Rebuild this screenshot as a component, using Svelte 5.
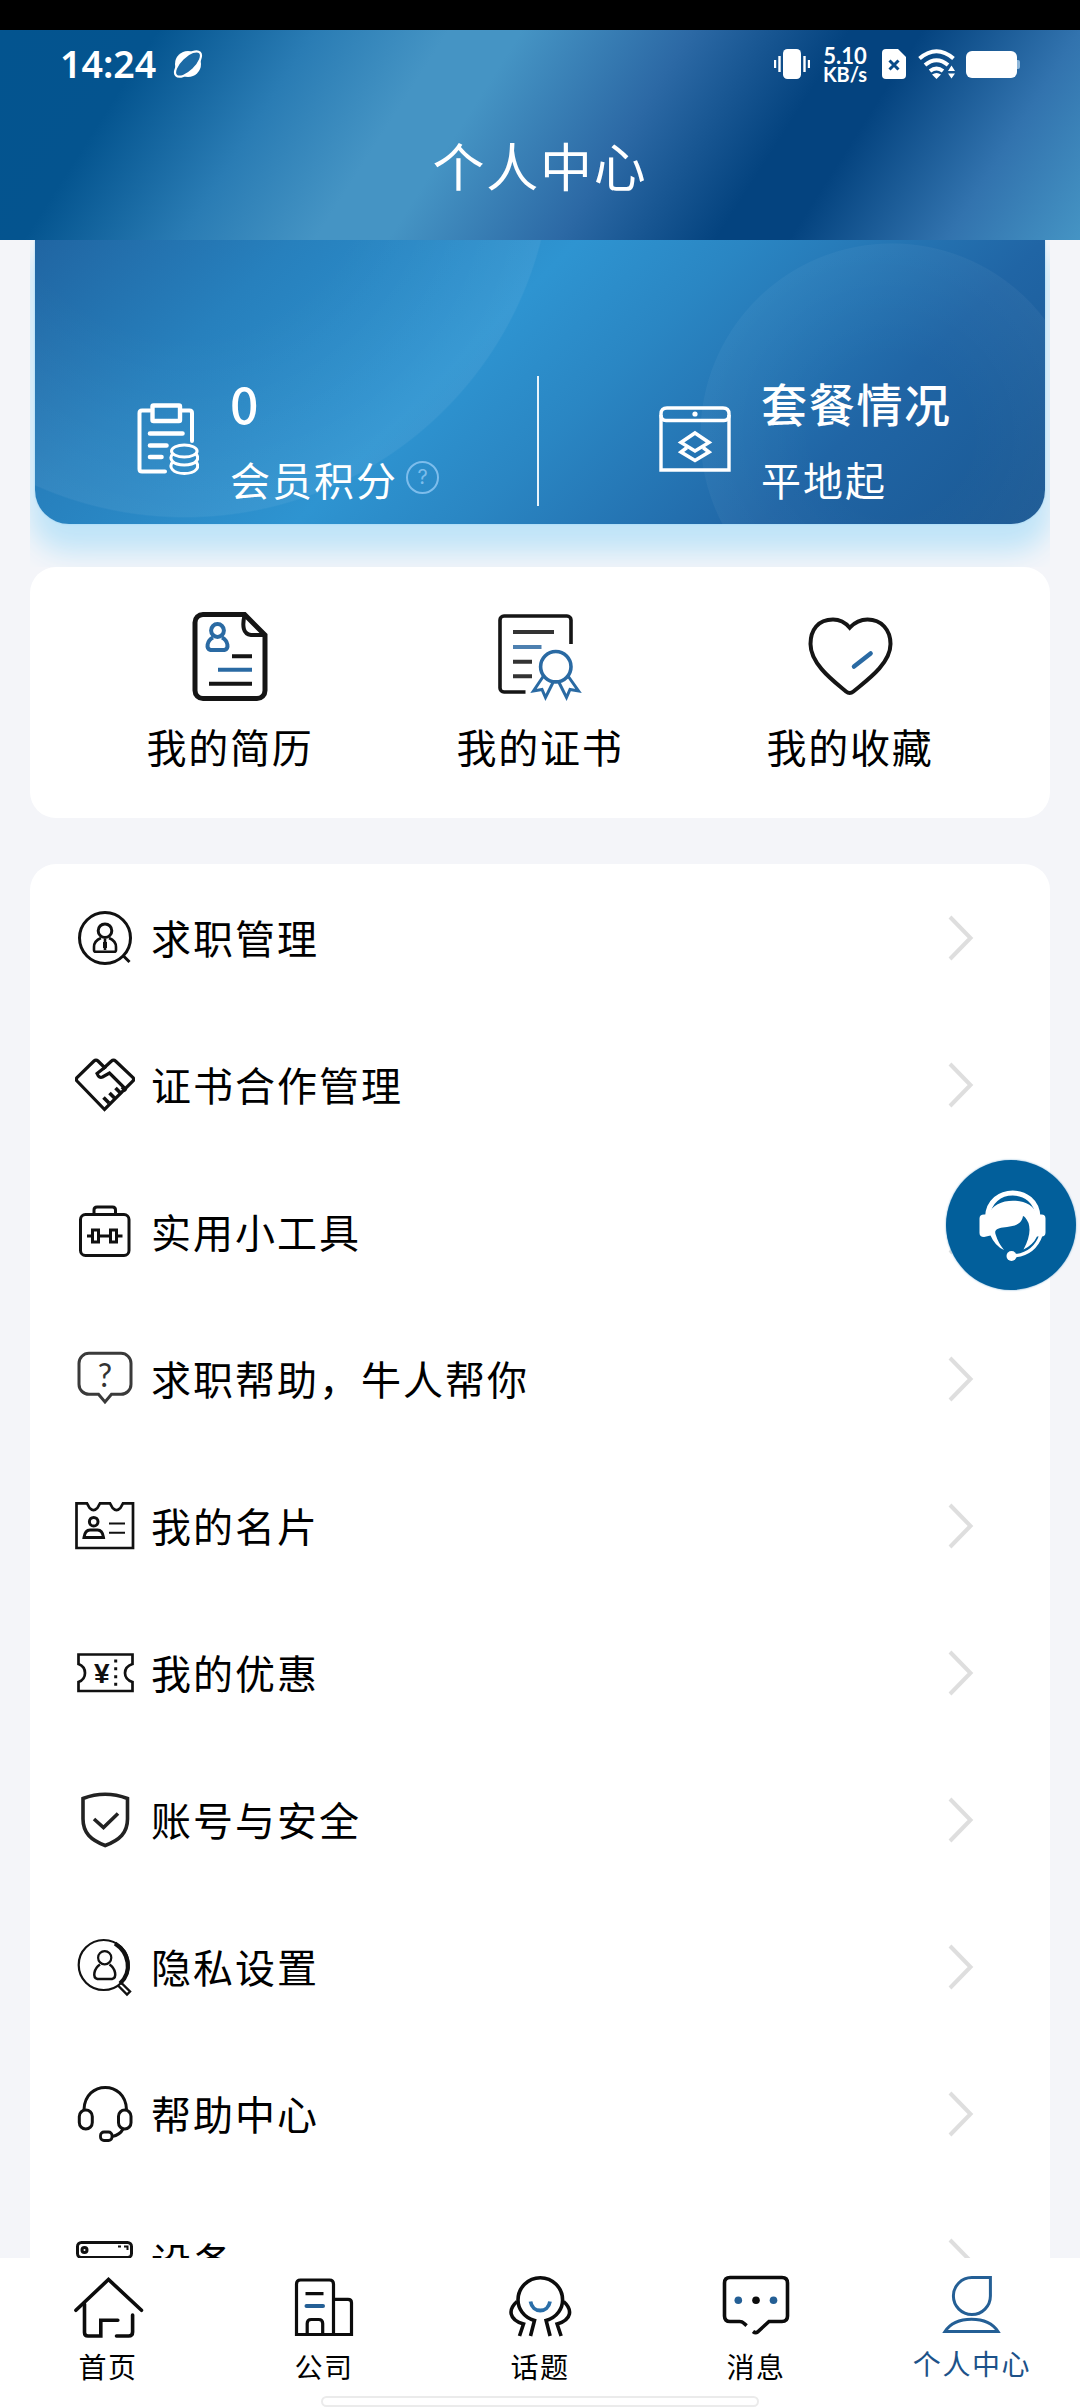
<script>
  const shortcuts = [
    { icon: 'resume', label: '我的简历' },
    { icon: 'certificate', label: '我的证书' },
    { icon: 'favorite', label: '我的收藏' }
  ];

  const menu = [
    { icon: 'job', label: '求职管理' },
    { icon: 'handshake', label: '证书合作管理' },
    { icon: 'tools', label: '实用小工具' },
    { icon: 'question', label: '求职帮助，牛人帮你' },
    { icon: 'card', label: '我的名片' },
    { icon: 'coupon', label: '我的优惠' },
    { icon: 'shield', label: '账号与安全' },
    { icon: 'privacy', label: '隐私设置' },
    { icon: 'headset', label: '帮助中心' },
    { icon: 'device', label: '设备' }
  ];

  const tabs = [
    { icon: 'home', label: '首页' },
    { icon: 'company', label: '公司' },
    { icon: 'topic', label: '话题' },
    { icon: 'message', label: '消息' },
    { icon: 'me', label: '个人中心' }
  ];

  let activeTab = $state('me');
</script>

{#snippet shortcutIcon(name)}
  <svg class="shortcut-icon" viewBox="0 0 96 96" fill="none" stroke="#151515" stroke-width="4">
    {#if name === 'resume'}
      <path d="M62.6 5.500H21a8 8 0 0 0-8 8v68a8 8 0 0 0 8 8h54a8 8 0 0 0 8-8V26z" stroke-width="5"></path>
      <path d="M62.6 6C60 17 61 25 69 26h14" stroke-width="4"></path>
      <g stroke="#2a6aa3" stroke-width="4">
        <circle cx="35.5" cy="21.5" r="6.4"></circle>
        <path d="M31 28.500c-6 3-7.500 11.500-2.500 12.500h14c5-1 3.500-9.500-2.500-12.500"></path>
      </g>
      <path d="M50 47.300h20M27 74.700h43"></path>
      <path d="M36 60.700h34" stroke="#2a6aa3"></path>
    {:else if name === 'certificate'}
      <path d="M79 35V11a4 4 0 0 0-4-4H12a4 4 0 0 0-4 4v68a4 4 0 0 0 4 4h21.500" stroke-width="3.600"></path>
      <path d="M21 23h41M21 52.700h19M21 67.300h19" stroke="#333"></path>
      <path d="M21 38h28.500" stroke="#4d80b0"></path>
      <g stroke="#2a6aa3" stroke-width="3.600">
        <circle cx="63.800" cy="57.700" r="15.200"></circle>
        <path d="M51.500 67l-10 15 8.500-1.500 3.500 8 8-16M76 67l10.500 15-8.500-1.500-3.500 8-8-16" stroke-width="3"></path>
      </g>
    {:else if name === 'favorite'}
      <path d="M47.700 18.700C42 12 36 10.500 31 10.500 16 10.500 8.500 21 8.500 35c0 20 23 37 35.500 47.500q3.700 3 7.400 0C64 72 88.500 55 88.500 35c0-14-9-24.500-23-24.500-6 0-12 2-17.800 8.200z"></path>
      <path d="M68.600 44.500L52 57.500" stroke="#2a6aa3" stroke-width="4.500" stroke-linecap="round"></path>
    {/if}
  </svg>
{/snippet}

{#snippet menuIcon(name)}
  <svg class="menu-icon" viewBox="0 0 60 60" fill="none" stroke="#111" stroke-width="3">
    {#if name === 'job'}
      <circle cx="30" cy="29" r="25.500"></circle>
      <path d="M48.500 47l6 6"></path>
      <circle cx="30" cy="21.700" r="6.800"></circle>
      <path d="M26 29c-5 2-7 4.500-7 9v3q0 1.800 1.800 1.800h18.400q1.800 0 1.800-1.800v-3c0-4.500-2-7-7-9M30 30v11" stroke-width="2.600"></path>
      <path d="M30 33v6" stroke-width="4"></path>
    {:else if name === 'handshake'}
      <path d="M29.500 53.500L2 25q-1.500-1.700 0-3.400L19 5q2-2 4 0l6.500 6.500L36.500 5q2-2 4 0L58 21.600q1.500 1.700 0 3.400z" stroke-width="3.200"></path>
      <path d="M31 10.500l-9 7q2 5 5.500 3.500l7-4 16.500 16.500" stroke-width="3.200"></path>
      <path d="M28.500 41.500l5.500 5.500M34.500 37l5.500 5.500M40.500 32l6 6M47 31l4 4" stroke-width="3.600"></path>
    {:else if name === 'tools'}
      <rect x="5.500" y="11.500" width="48.500" height="41" rx="5"></rect>
      <path d="M19 11.500V7q0-3 3-3h15.500q3 0 3 3v4.500"></path>
      <path d="M12 33h5.500M24 33h11.500M41.500 33H47.500"></path>
      <path d="M17.500 27h6v12h-6zM35.500 27h6v12h-6z" stroke-width="3"></path>
    {:else if name === 'question'}
      <path d="M14 3.300h32a10 10 0 0 1 10 10v21a10 10 0 0 1-10 10H36.500L30 52l-6.500-7.700H14a10 10 0 0 1-10-10v-21a10 10 0 0 1 10-10z" stroke="#3a3a3a"></path>
      <text class="glyph thin" x="30" y="37" text-anchor="middle">?</text>
    {:else if name === 'card'}
      <path d="M1.500 6.300h10.500l2.500 4.500q4 4.500 8 0l2.500-4.500h10l2.500 4.500q4 4.500 8 0l2.500-4.500H58v44.700H1.500z" stroke-width="2.700"></path>
      <circle cx="18.700" cy="24.700" r="4.300"></circle>
      <path d="M9 40.500q1-7.500 6-7.500h7.500q5 0 6 7.500z"></path>
      <path d="M34 26.500h16M34 35.800h16" stroke-width="2"></path>
    {:else if name === 'coupon'}
      <path d="M3.500 10.500h54V20q-7.500 2.500-7.500 9t7.500 9v9h-54v-9q6.500-2.500 6.500-9t-6.500-9z" stroke-width="2.700"></path>
      <text class="glyph" x="26.700" y="38.500" text-anchor="middle">¥</text>
      <path d="M40.700 15.500v3M40.700 23.200v3M40.700 31.200v3M40.700 38.800v3" stroke-width="3"></path>
    {:else if name === 'shield'}
      <path d="M8 7.500Q30-1 52.500 7.500V28c0 14-8 21-22.300 26.500C16 49 8 42 8 28z" stroke="#222" stroke-width="3.600"></path>
      <path d="M19 28l9.500 8.500L43 22.500" stroke="#222" stroke-width="3.600"></path>
    {:else if name === 'privacy'}
      <circle cx="28.700" cy="27" r="25" stroke-width="2.200"></circle>
      <path d="M40 5.500c14 9 18 28 5 40" stroke-width="4.200"></path>
      <circle cx="29.700" cy="19.700" r="6.600" stroke-width="2.200"></circle>
      <path d="M25 26.500c-6 4-8 13-2.500 14.500h14.500c5.500-1.500 3.500-10.500-2.500-14.500" stroke-width="2.500"></path>
      <path d="M43 47.500l9 9 3-3-9-9" stroke-width="2.400"></path>
    {:else if name === 'headset'}
      <path d="M9 24.500C10 -5 50.500-5 51.500 24.500"></path>
      <rect x="4.300" y="25" width="13" height="19" rx="6.500"></rect>
      <rect x="43.500" y="25" width="12.500" height="19" rx="6.300"></rect>
      <rect x="25.500" y="47" width="11.500" height="8.500" rx="3.500" stroke-width="2.800"></rect>
      <path d="M37 51.500q8-1.500 11-7.500"></path>
    {:else if name === 'device'}
      <rect x="2.500" y="10.500" width="54" height="15" rx="4" stroke-width="3"></rect>
      <circle cx="9.500" cy="18" r="2.500"></circle>
      <path d="M43 14.500h3M49 14.500h3.500v3.500" stroke-width="2"></path>
    {/if}
  </svg>
{/snippet}

{#snippet tabIcon(name)}
  <svg class="tab-icon" viewBox="0 0 72 64" fill="none" stroke="#0c0c0c" stroke-width="3.600">
    {#if name === 'home'}
      <g stroke-linecap="round">
        <path d="M3.900 36.300L36.500 5.500l33 30.800"></path>
        <path d="M12.500 30v28.500q0 3.500 3.500 3.500h12.800V46.200h17"></path>
        <path d="M60.600 41v17q0 4-4 4H44.500"></path>
      </g>
    {:else if name === 'company'}
      <g stroke-width="3.200">
        <path d="M8.500 60.500V10q0-4 4-4H41.500q4 0 4 4v50.500zM45.500 25.300h14.500q3.500 0 3.500 3.500v31.700h-18"></path>
        <path d="M19.200 60V49.500q0-4 4-4h7.500q4 0 4 4V60M17.500 19.700h18"></path>
      </g>
      <path d="M18.500 32h16.500" stroke="#245f95" stroke-width="4" stroke-linecap="round"></path>
    {:else if name === 'topic'}
      <path d="M26.500 62l4-15.500C19 43 14 34 14 26a22.300 22.300 0 0 1 44.600 0c0 8-5 17-16.500 20.500l4 15.500"></path>
      <path d="M13 27.500c-9 8-8.500 18 6.500 22.500L15.500 62M59.600 27.500c9 8 8.500 18-6.500 22.500l4 12"></path>
      <path d="M26.500 27.500c2 12 17.500 12 19.500 0" stroke="#2a6ea8" stroke-width="3.800"></path>
    {:else if name === 'message'}
      <path d="M26.600 51.700l-3-2.700q-1.500-1.500-4-1.500H10q-5.500 0-5.500-5.500V9q0-5.500 5.500-5.500h52q5.500 0 5.500 5.500v33q0 5.500-5.500 5.500H49L37.500 58q-2 1.500-4.500-.500"></path>
      <circle cx="18.300" cy="26.200" r="3.800" fill="#245f95" stroke="none"></circle>
      <circle cx="36" cy="26.200" r="3.800" fill="#0c0c0c" stroke="none"></circle>
      <circle cx="53.500" cy="26.200" r="3.800" fill="#245f95" stroke="none"></circle>
    {:else if name === 'me'}
      <g stroke="#245f95" stroke-width="3">
        <path d="M54.400 3.500H35.800a18.500 18.500 0 1 0 18.600 18.500z"></path>
        <path d="M9 57.500q8-12.300 26.500-12.300t26.500 12.300z"></path>
      </g>
    {/if}
  </svg>
{/snippet}

<div class="screen">
  <div class="notch"></div>

  <header class="header">
    <div class="status-bar">
      <span class="time">14:24</span>
      <svg class="planet" viewBox="0 0 32 30">
        <circle cx="16" cy="15" r="13" fill="#fff"></circle>
        <ellipse cx="16" cy="15" rx="16.500" ry="7.500" fill="#1c6aa5" stroke="#fff" stroke-width="2.200" transform="rotate(-44 16 15)"></ellipse>
      </svg>
      <div class="status-icons">
        <svg width="36" height="30" viewBox="0 0 36 30" fill="#fff">
          <rect x="9" y="0" width="18" height="30" rx="4.500"></rect>
          <rect x="0" y="11" width="2.200" height="8"></rect>
          <rect x="4.300" y="7" width="2.400" height="16"></rect>
          <rect x="29.300" y="7" width="2.400" height="16"></rect>
          <rect x="33.800" y="11" width="2.200" height="8"></rect>
        </svg>
        <div class="speed">
          <span class="speed-value">5.10</span>
          <span class="speed-unit">KB/s</span>
        </div>
        <svg class="sim" width="24" height="30" viewBox="0 0 24 30">
          <path d="M4 0h12l8 8v18a4 4 0 0 1-4 4H4a4 4 0 0 1-4-4V4a4 4 0 0 1 4-4z" fill="#fff"></path>
          <path d="M7.500 11.500l9 9M16.500 11.500l-9 9" stroke="#0a4a87" stroke-width="3"></path>
        </svg>
        <svg class="wifi" width="37" height="30" viewBox="0 0 37 30">
          <g fill="none" stroke="#fff" stroke-width="4">
            <path d="M1.500 9.500Q18.500-5 35.500 9.500"></path>
            <path d="M7 16q11.500-9.500 23 0"></path>
            <path d="M12 22q6.500-5 13 0"></path>
          </g>
          <path d="M14 25.500q4.500-3 9 0L18.500 30z" fill="#fff"></path>
          <path d="M30 22l3.500-5.500L37 22zM30 24.500h7L33.500 29.500z" fill="#fff"></path>
        </svg>
        <svg class="battery" width="54" height="27" viewBox="0 0 54 27">
          <rect x="0" y="0" width="51" height="27" rx="6" fill="#fff"></rect>
          <path d="M51 9h1a2 2 0 0 1 2 2v5a2 2 0 0 1-2 2h-1z" fill="#8db6d9"></path>
        </svg>
      </div>
    </div>
    <h1 class="title">个人中心</h1>
  </header>

  <main class="content">
    <section class="member-wrap">
      <div class="member-card">
        <div class="stat stat-points">
          <svg class="points-icon" viewBox="0 0 62 72" fill="none" stroke="#fff" stroke-width="4">
            <path d="M13 7.500H5q-2.500 0-2.500 2.500v56q0 2.500 2.500 2.500H28M44 7.500h8.500q2.500 0 2.500 2.500v28" stroke-linecap="round"></path>
            <rect x="15.500" y="2.500" width="27.500" height="15.500" rx="1" stroke-width="4.400"></rect>
            <path d="M13 30.500h32.500M13 42.500h16.500M13 54h11.500" stroke-width="4.600" stroke-linecap="round"></path>
            <g stroke-width="3">
              <ellipse cx="47.300" cy="48" rx="12.800" ry="6"></ellipse>
              <path d="M35.500 51c-4 5 0 11 11.800 11s15.800-6 11.800-11M35.500 59c-4 5 0 11.500 11.800 11.500s15.800-6.500 11.800-11.500"></path>
            </g>
          </svg>
          <div class="stat-text">
            <div class="points-value">0</div>
            <div class="stat-label">会员积分<span class="help">?</span></div>
          </div>
        </div>
        <div class="divider"></div>
        <div class="stat stat-plan">
          <svg class="plan-icon" viewBox="0 0 72 66" fill="none" stroke="#fff" stroke-width="3.400">
            <path d="M2 15V8q0-6 6-6h56q6 0 6 6v7M2 9v55h68V9"></path>
            <path d="M2 9q0 5.500 5 5.500h58q5 0 5-5.500"></path>
            <circle cx="36" cy="8" r="2.600" fill="#fff" stroke="none"></circle>
            <path d="M36 27L50 36.500 36 45 22 36.500z" stroke-width="3.600"></path>
            <path d="M28 41.500l-6 4.500L36 54.500 50 46l-6-4.500" stroke-width="3.600"></path>
          </svg>
          <div class="stat-text">
            <div class="plan-value">套餐情况</div>
            <div class="stat-label">平地起</div>
          </div>
        </div>
      </div>
    </section>

    <section class="shortcuts">
      {#each shortcuts as item (item.icon)}
        <button type="button" class="shortcut">
          {@render shortcutIcon(item.icon)}
          <span class="shortcut-label">{item.label}</span>
        </button>
      {/each}
    </section>

    <section class="menu">
      {#each menu as item (item.icon)}
        <button type="button" class="menu-row">
          {@render menuIcon(item.icon)}
          <span class="menu-label">{item.label}</span>
          <svg class="chevron" viewBox="0 0 26 46" fill="none" stroke="#dedede" stroke-width="4">
            <path d="M2 2l20.500 21L2 44"></path>
          </svg>
        </button>
      {/each}
    </section>
  </main>

  <nav class="tab-bar">
    {#each tabs as tab (tab.icon)}
      <button type="button" class="tab" class:active={activeTab === tab.icon} onclick={() => (activeTab = tab.icon)}>
        {@render tabIcon(tab.icon)}
        <span class="tab-label">{tab.label}</span>
      </button>
    {/each}
    <div class="home-indicator"></div>
  </nav>

  <button type="button" class="service" aria-label="客服">
    <svg viewBox="0 0 130 130" fill="#fff">
      <path d="M41.500 57C43 25 90.500 25 92 57" fill="none" stroke="#fff" stroke-width="5"></path>
      <path d="M38 54.500h5C47 36 87 36 90.500 54.500h5q4 0 4 4v14q0 4-4 4H91Q87 85 77.500 89.500 86 74 82.500 63 79 56 77 56C75.500 66 66 66 57 67.500 49.500 68.500 48 71 50 75.500q2 7 8 14.500Q49 86 44.500 75.500L38 77q-4.500 0-4.500-4V58.500q0-4 4.500-4z"></path>
      <path d="M95 75Q88 95 66 96" fill="none" stroke="#fff" stroke-width="3.400"></path>
      <circle cx="65.500" cy="96" r="5"></circle>
    </svg>
  </button>
</div>

<style>
  :global(body) {
    margin: 0;
    background: #f4f5f9;
  }

  .screen {
    position: relative;
    display: flex;
    flex-direction: column;
    width: 1080px;
    height: 2408px;
    overflow: hidden;
    background: #f4f5f9;
    color: #000;
    font-family: 'Noto Sans CJK SC', 'Noto Sans', sans-serif;
  }

  button {
    margin: 0;
    padding: 0;
    border: none;
    background: none;
    color: inherit;
    font: inherit;
    cursor: pointer;
  }

  svg {
    display: block;
    flex-shrink: 0;
  }

  .notch {
    height: 30px;
    flex-shrink: 0;
    background: #000;
  }

  .header {
    display: flex;
    flex-direction: column;
    height: 210px;
    flex-shrink: 0;
    color: #fff;
    background: linear-gradient(122.6deg, #03548f 0%, #04548f 13%, #2a7cb4 26%, #4594c4 37%, #4594c4 43%, #2c69a5 57%, #04437f 70%, #04437f 76%, #3273ae 89%, #4594c4 100%);
  }

  .status-bar {
    display: flex;
    align-items: center;
    height: 68px;
    padding: 0 60px 0 60px;
  }

  .time {
    font-family: 'Noto Sans', sans-serif;
    font-size: 37.500px;
    font-weight: 600;
    line-height: 1;
  }

  .planet {
    width: 32px;
    height: 30px;
    margin-left: 16px;
  }

  .status-icons {
    display: flex;
    align-items: center;
    margin-left: auto;
  }

  .speed {
    display: flex;
    flex-direction: column;
    width: 46px;
    margin: 1px 14px 0 12px;
    font-family: Lato, sans-serif;
    font-weight: 700;
    line-height: 19px;
    text-align: center;
  }

  .speed-value {
    font-size: 22px;
  }

  .speed-unit {
    font-size: 20px;
  }

  .wifi {
    margin-left: 12px;
  }

  .battery {
    margin-left: 11px;
  }

  .title {
    margin: 35px 0 0;
    font-size: 52px;
    font-weight: 400;
    line-height: 64px;
    letter-spacing: 1.700px;
    text-align: center;
  }

  .content {
    flex: 1;
    min-height: 0;
    padding: 0 30px;
    overflow: hidden;
  }

  .member-wrap {
    height: 327px;
    padding: 0 5px;
    overflow: hidden;
  }

  .member-card {
    display: flex;
    align-items: flex-start;
    height: 284px;
    border-radius: 0 0 34px 34px;
    color: #fff;
    background:
      radial-gradient(circle 192px at 857px 195px, rgba(255, 255, 255, 0) 40%, rgba(255, 255, 255, 0.04) 99.500%, transparent 100%),
      radial-gradient(circle 368px at 150px -90px, rgba(255, 255, 255, 0) 50%, rgba(255, 255, 255, 0.06) 99.600%, transparent 100%),
      linear-gradient(135deg, #2065a2 0%, #2780bd 20%, #2e94d1 42%, #2a86c3 55%, #2065a5 78%, #1a5893 100%);
    box-shadow: 0 0 2px #8fd0f5, 0 22px 28px 6px #bfe4f8;
  }

  .stat {
    display: flex;
    align-items: flex-start;
    padding-top: 136px;
  }

  .stat-points {
    width: 400px;
    padding-left: 102px;
  }

  .points-icon {
    width: 62px;
    height: 72px;
    margin: 27px 31px 0 0;
  }

  .points-value {
    height: 61px;
    font-size: 50px;
    font-weight: 500;
    line-height: 52px;
  }

  .stat-label {
    display: flex;
    align-items: center;
    height: 84px;
    font-size: 40px;
    letter-spacing: 2px;
  }

  .help {
    box-sizing: border-box;
    width: 33px;
    height: 33px;
    margin: -3px 0 0 8px;
    border: 2px solid #7dbdec;
    border-radius: 50%;
    color: #7dbdec;
    font-family: Inter, sans-serif;
    font-size: 20px;
    letter-spacing: 0;
    line-height: 29px;
    text-align: center;
  }

  .divider {
    width: 2px;
    height: 130px;
    margin-top: 136px;
    background: #e9f4fb;
  }

  .stat-plan {
    padding-left: 120px;
  }

  .plan-icon {
    width: 72px;
    height: 66px;
    margin: 30px 30px 0 0;
  }

  .plan-value {
    height: 61px;
    font-size: 46px;
    font-weight: 500;
    letter-spacing: 1.700px;
    line-height: 52px;
  }

  .shortcuts {
    display: flex;
    height: 251px;
    padding: 0 45px;
    box-sizing: border-box;
    border-radius: 26px;
    background: #fff;
  }

  .shortcut {
    display: flex;
    flex: 1;
    flex-direction: column;
    align-items: center;
    padding-top: 42px;
  }

  .shortcut-icon {
    width: 96px;
    height: 96px;
  }

  .shortcut-label {
    margin-top: 11px;
    font-size: 40px;
    letter-spacing: 1.700px;
    line-height: 60px;
  }

  .menu {
    margin-top: 46px;
    padding-top: 1px;
    border-radius: 26px;
    background: #fff;
  }

  .menu-row {
    display: flex;
    align-items: center;
    width: 100%;
    height: 147px;
    padding: 0 76px 0 45px;
    text-align: left;
  }

  .menu-icon {
    width: 60px;
    height: 60px;
  }

  .menu-label {
    flex: 1;
    margin-left: 16px;
    padding-bottom: 3px;
    font-size: 40px;
    letter-spacing: 2px;
    line-height: 60px;
  }

  .chevron {
    width: 26px;
    height: 46px;
    margin-bottom: 2px;
  }

  .glyph {
    fill: #111;
    stroke: none;
    font-family: 'Liberation Sans', sans-serif;
    font-size: 28px;
    font-weight: 700;
  }

  .glyph.thin {
    fill: #333;
    font-family: Lato, sans-serif;
    font-size: 32px;
    font-weight: 400;
  }

  .tab-bar {
    position: relative;
    display: flex;
    height: 150px;
    flex-shrink: 0;
    background: #fff;
  }

  .tab {
    display: flex;
    flex: 1;
    flex-direction: column;
    align-items: center;
    padding-top: 16px;
    justify-content: flex-start;
  }

  .tab-icon {
    width: 72px;
    height: 64px;
  }

  .tab-label {
    margin-top: 8px;
    font-size: 28px;
    letter-spacing: 1.600px;
    line-height: 40px;
  }

  .tab.active .tab-label {
    margin-top: 5px;
    color: #1d5289;
  }

  .home-indicator {
    position: absolute;
    bottom: 1px;
    left: 50%;
    box-sizing: border-box;
    width: 438px;
    height: 11px;
    border: 2px solid #ebebeb;
    border-radius: 6px;
    background: #fff;
    transform: translateX(-50%);
  }

  .service {
    position: absolute;
    top: 1160px;
    left: 946px;
    width: 130px;
    height: 130px;
    border-radius: 50%;
    background: #025f9b;
    box-shadow: 0 0 2px #6aa4cc;
  }
</style>
